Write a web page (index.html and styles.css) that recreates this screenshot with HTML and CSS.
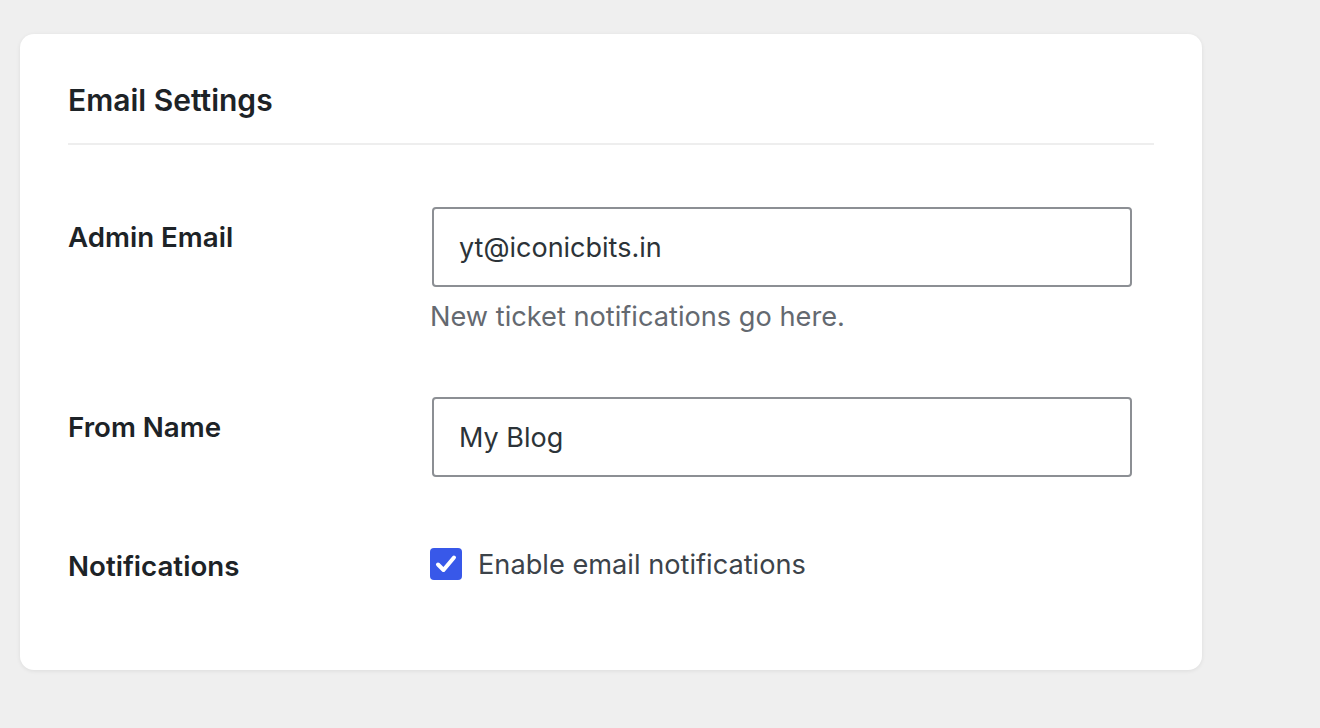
FILE: index.html
```html
<!DOCTYPE html>
<html lang="en">
<head>
  <meta charset="UTF-8" />
  <title>Email Settings</title>
  <meta name="viewport" content="width=device-width, initial-scale=1.0"/>
  <link rel="stylesheet" href="styles.css">
</head>
<body>

  <div class="settings-card">
    <h2 class="card-title">Email Settings</h2>

    <form class="settings-form">
      <div class="field-row">
        <label class="field-label" for="admin-email">Admin Email</label>
        <div class="field-control">
          <input type="text" id="admin-email" class="text-input" value="yt@iconicbits.in">
          <p class="field-help">New ticket notifications go here.</p>
        </div>
      </div>

      <div class="field-row">
        <label class="field-label" for="from-name">From Name</label>
        <div class="field-control">
          <input type="text" id="from-name" class="text-input" value="My Blog">
        </div>
      </div>

      <div class="field-row field-row-check">
        <div class="field-label">Notifications</div>
        <div class="field-control">
          <label class="check-label">
            <span class="check-box">
              <svg width="32" height="32" viewBox="0 0 32 32">
                <path d="M8 16.5 L13.5 22 L24 9.5" fill="none" stroke="#fff" stroke-width="4" stroke-linecap="round" stroke-linejoin="round"/>
              </svg>
            </span>
            Enable email notifications
          </label>
        </div>
      </div>
    </form>
  </div>

</body>
</html>
```

FILE: styles.css
```css
/* reset */
* {
  margin: 0;
  padding: 0;
  box-sizing: border-box;
}

body {
  background-color: #efefef;
  font-family: Inter, "Noto Sans", sans-serif;
  color: #1d2327;
  padding: 34px 20px;
  min-height: 100vh;
}

.settings-card {
  width: 1182px;
  background-color: #fff;
  border-radius: 14px;
  box-shadow: 0 1px 4px rgba(0, 0, 0, 0.08);
  padding: 46px 48px 81px;
}

.card-title {
  font-size: 30px;
  font-weight: 600;
  line-height: 40px;
  padding-bottom: 23px;
  border-bottom: 2px solid #eeeeee;
}

.field-row {
  display: grid;
  grid-template-columns: 364px 700px;
  margin-top: 62px;
}

.field-label {
  font-size: 27.7px;
  font-weight: 600;
  line-height: 36px;
  padding-top: 12px;
}

.text-input {
  display: block;
  width: 700px;
  height: 80px;
  border: 2px solid #8c8f94;
  border-radius: 4px;
  padding: 0 25px;
  font-family: inherit;
  font-size: 27px;
  color: #2c3338;
  outline: none;
}

.field-help {
  margin-top: 12px;
  margin-left: -2px;
  font-size: 27.2px;
  line-height: 36px;
  color: #646970;
}

.field-row-check {
  height: 50px;
  align-items: center;
}

.field-row-check .field-label {
  padding-top: 4px;
}

.check-label {
  display: flex;
  align-items: center;
  gap: 16px;
  margin-left: -2px;
  font-size: 27.2px;
  color: #3c434a;
}

.check-box {
  width: 32px;
  height: 32px;
  border-radius: 4px;
  background-color: #3858e9;
  display: flex;
  align-items: center;
  justify-content: center;
}
```
